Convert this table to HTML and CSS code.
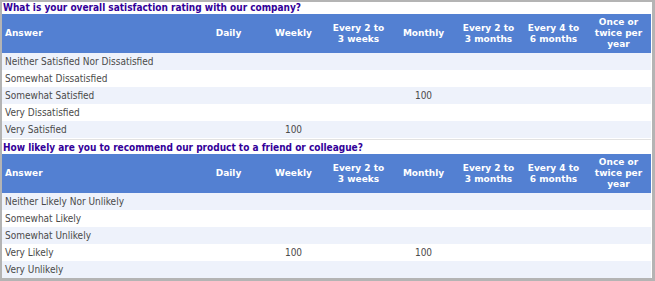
FILE: index.html
```html
<!DOCTYPE html>
<html>
<head>
<meta charset="utf-8">
<link rel="stylesheet" href="styles.css">
</head>
<body>
<div class="frame">
  <section class="question">
    <div class="q-title">What is your overall satisfaction rating with our company?</div>
    <table class="grid">
      <colgroup><col class="c-answer"><col><col><col><col><col><col><col></colgroup>
      <thead>
        <tr>
          <th class="answer">Answer</th>
          <th>Daily</th>
          <th>Weekly</th>
          <th>Every 2 to<br>3 weeks</th>
          <th>Monthly</th>
          <th>Every 2 to<br>3 months</th>
          <th>Every 4 to<br>6 months</th>
          <th>Once or<br>twice per<br>year</th>
        </tr>
      </thead>
      <tbody>
        <tr><td class="answer">Neither Satisfied Nor Dissatisfied</td><td></td><td></td><td></td><td></td><td></td><td></td><td></td></tr>
        <tr><td class="answer">Somewhat Dissatisfied</td><td></td><td></td><td></td><td></td><td></td><td></td><td></td></tr>
        <tr><td class="answer">Somewhat Satisfied</td><td></td><td></td><td></td><td>100</td><td></td><td></td><td></td></tr>
        <tr><td class="answer">Very Dissatisfied</td><td></td><td></td><td></td><td></td><td></td><td></td><td></td></tr>
        <tr><td class="answer">Very Satisfied</td><td></td><td>100</td><td></td><td></td><td></td><td></td><td></td></tr>
      </tbody>
    </table>
  </section>
  <section class="question second">
    <div class="q-title">How likely are you to recommend our product to a friend or colleague?</div>
    <table class="grid">
      <colgroup><col class="c-answer"><col><col><col><col><col><col><col></colgroup>
      <thead>
        <tr>
          <th class="answer">Answer</th>
          <th>Daily</th>
          <th>Weekly</th>
          <th>Every 2 to<br>3 weeks</th>
          <th>Monthly</th>
          <th>Every 2 to<br>3 months</th>
          <th>Every 4 to<br>6 months</th>
          <th>Once or<br>twice per<br>year</th>
        </tr>
      </thead>
      <tbody>
        <tr><td class="answer">Neither Likely Nor Unlikely</td><td></td><td></td><td></td><td></td><td></td><td></td><td></td></tr>
        <tr><td class="answer">Somewhat Likely</td><td></td><td></td><td></td><td></td><td></td><td></td><td></td></tr>
        <tr><td class="answer">Somewhat Unlikely</td><td></td><td></td><td></td><td></td><td></td><td></td><td></td></tr>
        <tr><td class="answer">Very Likely</td><td></td><td>100</td><td></td><td>100</td><td></td><td></td><td></td></tr>
        <tr><td class="answer">Very Unlikely</td><td></td><td></td><td></td><td></td><td></td><td></td><td></td></tr>
      </tbody>
    </table>
  </section>
</div>
</body>
</html>
```

FILE: styles.css
```css
* { box-sizing: border-box; }
html, body { margin: 0; padding: 0; background: #fff; }
.frame {
  width: 655px;
  height: 281px;
  border: 2px solid #b4b4b4;
  border-right-width: 3px;
  border-bottom-width: 3px;
  background: #fff;
  font-family: "DejaVu Sans", Verdana, sans-serif;
  overflow: hidden;
}
.question { width: 649px; }
.second { margin-top: 1px; border-top: 1px solid #e2e2e2; }
.q-title {
  height: 12px;
  line-height: 12px;
  padding-left: 1px;
  font-family: "DejaVu Sans Condensed", "DejaVu Sans", sans-serif;
  font-size: 10px;
  font-weight: bold;
  color: #330099;
  white-space: nowrap;
}
.second .q-title { height: 14px; line-height: 15px; }
.grid {
  width: 649px;
  border-collapse: collapse;
  table-layout: fixed;
}
.c-answer { width: 194px; }
.grid th {
  background: #5380d2;
  color: #fff;
  font-size: 9px;
  font-weight: bold;
  line-height: 11px;
  height: 39px;
  padding: 0;
  text-align: center;
  vertical-align: middle;
}
.grid th.answer { text-align: left; padding-left: 3px; }
.grid td {
  height: 17px;
  padding: 0;
  font-family: "DejaVu Sans Condensed", "DejaVu Sans", sans-serif;
  font-size: 10px;
  color: #4a4a4a;
  text-align: center;
  vertical-align: middle;
  white-space: nowrap;
}
.grid td.answer { text-align: left; padding-left: 3px; }
.grid tbody tr:nth-child(odd) td { background: #eef2fb; }
```
